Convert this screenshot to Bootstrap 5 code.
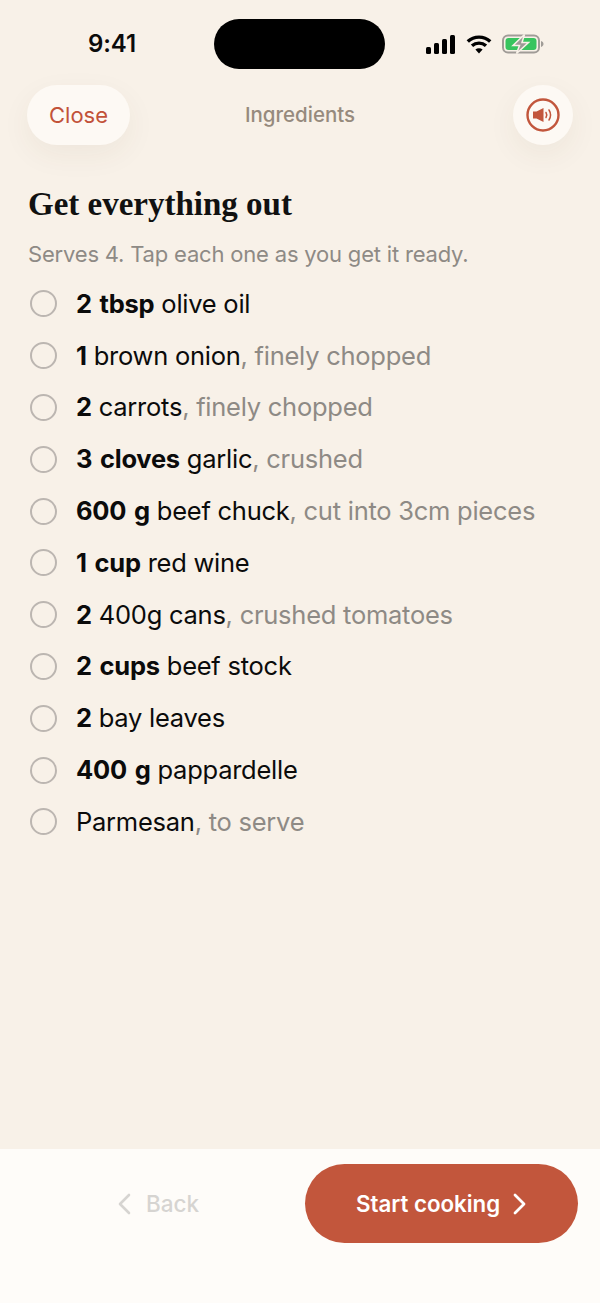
<!DOCTYPE html>
<html lang="en">
<head>
    <meta charset="UTF-8">
    <meta name="viewport" content="width=device-width, initial-scale=1.0">
    <title>Ingredients</title>
    <link href="https://cdn.jsdelivr.net/npm/bootstrap@5.3.0/dist/css/bootstrap.min.css" rel="stylesheet">
    <script src="https://cdn.jsdelivr.net/npm/bootstrap@5.3.0/dist/js/bootstrap.bundle.min.js"></script>
    <style>
        html, body { height: 100%; }
        body { background: #f8f1e8; font-family: Inter, "Liberation Sans", sans-serif; color: #0b0b0b; overflow: hidden; }
        .screen { height: 1303px; }
        .status-row { height: 85px; padding: 19px 0 0 88px; }
        .clock { width: 126px; font-size: 24px; font-weight: 600; line-height: 50px; letter-spacing: -0.1px; }
        .island { width: 171px; height: 50px; border-radius: 25px; background: #000; }
        .status-icons { height: 50px; margin-left: 41px; gap: 10px; }
        .top-row { padding: 0 27px; height: 60px; display: grid; grid-template-columns: 1fr auto 1fr; align-items: center; }
        .close-pill { width: 103px; height: 60px; border: 0; border-radius: 30px; background: #fdf9f4; color: #c25239; font-size: 22px; box-shadow: 0 10px 30px rgba(90, 60, 30, .06); padding: 0; }
        .top-title { font-size: 20.5px; font-weight: 500; color: #968a7d; }
        .sound-btn { width: 60px; height: 60px; border: 0; border-radius: 50%; background: #fdf9f4; box-shadow: 0 10px 30px rgba(90, 60, 30, .06); padding: 0; justify-self: end; }
        .main-area { padding: 38px 28px 0; }
        .page-head { font-family: "Liberation Serif", serif; font-weight: 700; font-size: 33px; line-height: 42px; margin: 0 0 12px; color: #111; }
        .page-sub { font-size: 22px; letter-spacing: -0.19px; line-height: 34px; color: #8e8a85; margin: 0 0 7px; }
        .ing-list { list-style: none; margin: 0; padding: 0; }
        .ing-row { height: 51.8px; gap: 19px; font-size: 25.5px; letter-spacing: -0.25px; padding-left: 2px; }
        .tick { width: 27px; height: 27px; border-radius: 50%; border: 2px solid #bcb6b1; flex: none; }
        .ing-row b { font-weight: 700; word-spacing: 2px; }
        .ing-note { color: #8e8a85; }
        .bottom-bar { height: 154px; background: #fefcf9; padding: 15px 22px 0 0; }
        .back-link { height: 79px; color: #d6d4d1; font-size: 22.5px; font-weight: 500; gap: 15px; margin-right: 106px; margin-left: 117px; }
        .start-btn { width: 273px; height: 79px; border: 0; border-radius: 40px; background: #c2563c; color: #fff; font-size: 22.3px; font-weight: 600; gap: 13px; padding: 0; }
    </style>
</head>
<body>
    <div class="screen d-flex flex-column">
        <div class="status-row d-flex align-items-start flex-shrink-0">
            <div class="clock">9:41</div>
            <div class="island"></div>
            <div class="status-icons d-flex align-items-center">
                <svg width="30" height="20" viewBox="0 0 30 20"><rect x="0" y="13" width="5" height="7" rx="1.5" fill="#000"/><rect x="8" y="9" width="5" height="11" rx="1.5" fill="#000"/><rect x="16" y="5" width="5" height="15" rx="1.5" fill="#000"/><rect x="24" y="1" width="5" height="19" rx="1.5" fill="#000"/></svg>
                <svg width="26" height="20" viewBox="0 0 26 20" fill="none" stroke="#000" stroke-width="3.4"><path d="M1.8 7.5C8 1.6 18 1.6 24.2 7.5"/><path d="M6 11.8C10 8.2 16 8.2 20 11.8"/><path d="M13 19.5L9.4 15.6C11.4 13.9 14.6 13.9 16.6 15.6Z" fill="#000" stroke="none"/></svg>
                <svg width="42" height="20" viewBox="0 0 42 20"><rect x="1" y="1.5" width="36" height="17" rx="5" fill="none" stroke="#a09c97" stroke-width="2"/><rect x="3.500" y="4" width="31" height="12" rx="3" fill="#37c45e"/><path d="M39 7v6c1.500-.4 2.500-1.600 2.500-3S40.500 7.400 39 7z" fill="#a09c97"/><path d="M22.500 0.500L11 11.500h6.500L14.500 19.500 26.500 8.500h-6.500z" fill="#9c9a96" stroke="#f8f1e8" stroke-width="1.500"/></svg>
            </div>
        </div>

        <div class="top-row flex-shrink-0">
            <button class="close-pill" type="button">Close</button>
            <div class="top-title">Ingredients</div>
            <button class="sound-btn d-flex align-items-center justify-content-center" type="button" aria-label="Sound">
                <svg width="34" height="34" viewBox="0 0 34 34" fill="none"><circle cx="17" cy="17" r="15.500" stroke="#c2563c" stroke-width="2.400"/><path d="M7 13.500h3.500L17.500 10v14l-7-3.500H7z" fill="#c2563c"/><path d="M20 14.500c1 1.600 1 3.400 0 5M23 12c2 3.200 2 6.800 0 10" stroke="#c2563c" stroke-width="1.500" stroke-linecap="round"/></svg>
            </button>
        </div>

        <div class="main-area flex-grow-1">
            <h1 class="page-head">Get everything out</h1>
            <p class="page-sub">Serves 4. Tap each one as you get it ready.</p>
            <ul class="ing-list" id="ingredients"></ul>
        </div>

        <div class="bottom-bar d-flex align-items-start flex-shrink-0">
            <div class="back-link d-flex align-items-center">
                <svg width="14" height="22" viewBox="0 0 14 22" fill="none" stroke="#d6d4d1" stroke-width="2.600" stroke-linecap="round" stroke-linejoin="round"><path d="M12 2L3 11l9 9"/></svg>
                <span>Back</span>
            </div>
            <button class="start-btn d-flex align-items-center justify-content-center" type="button">
                <span>Start cooking</span>
                <svg width="14" height="22" viewBox="0 0 14 22" fill="none" stroke="#fff" stroke-width="2.800" stroke-linecap="round" stroke-linejoin="round"><path d="M2 2l9 9-9 9"/></svg>
            </button>
        </div>
    </div>

    <script>
        const items = [
            ['2 tbsp', ' olive oil', ''],
            ['1', ' brown onion', ', finely chopped'],
            ['2', ' carrots', ', finely chopped'],
            ['3 cloves', ' garlic', ', crushed'],
            ['600 g', ' beef chuck', ', cut into 3cm pieces'],
            ['1 cup', ' red wine', ''],
            ['2', ' 400g cans', ', crushed tomatoes'],
            ['2 cups', ' beef stock', ''],
            ['2', ' bay leaves', ''],
            ['400 g', ' pappardelle', ''],
            ['', 'Parmesan', ', to serve']
        ];
        const list = document.getElementById('ingredients');
        items.forEach(([qty, name, note]) => {
            const row = document.createElement('li');
            row.className = 'ing-row d-flex align-items-center';
            row.innerHTML = `<span class="tick"></span><span>${qty ? `<b>${qty}</b>` : ''}${name}<span class="ing-note">${note}</span></span>`;
            list.appendChild(row);
        });
    </script>
</body>
</html>
